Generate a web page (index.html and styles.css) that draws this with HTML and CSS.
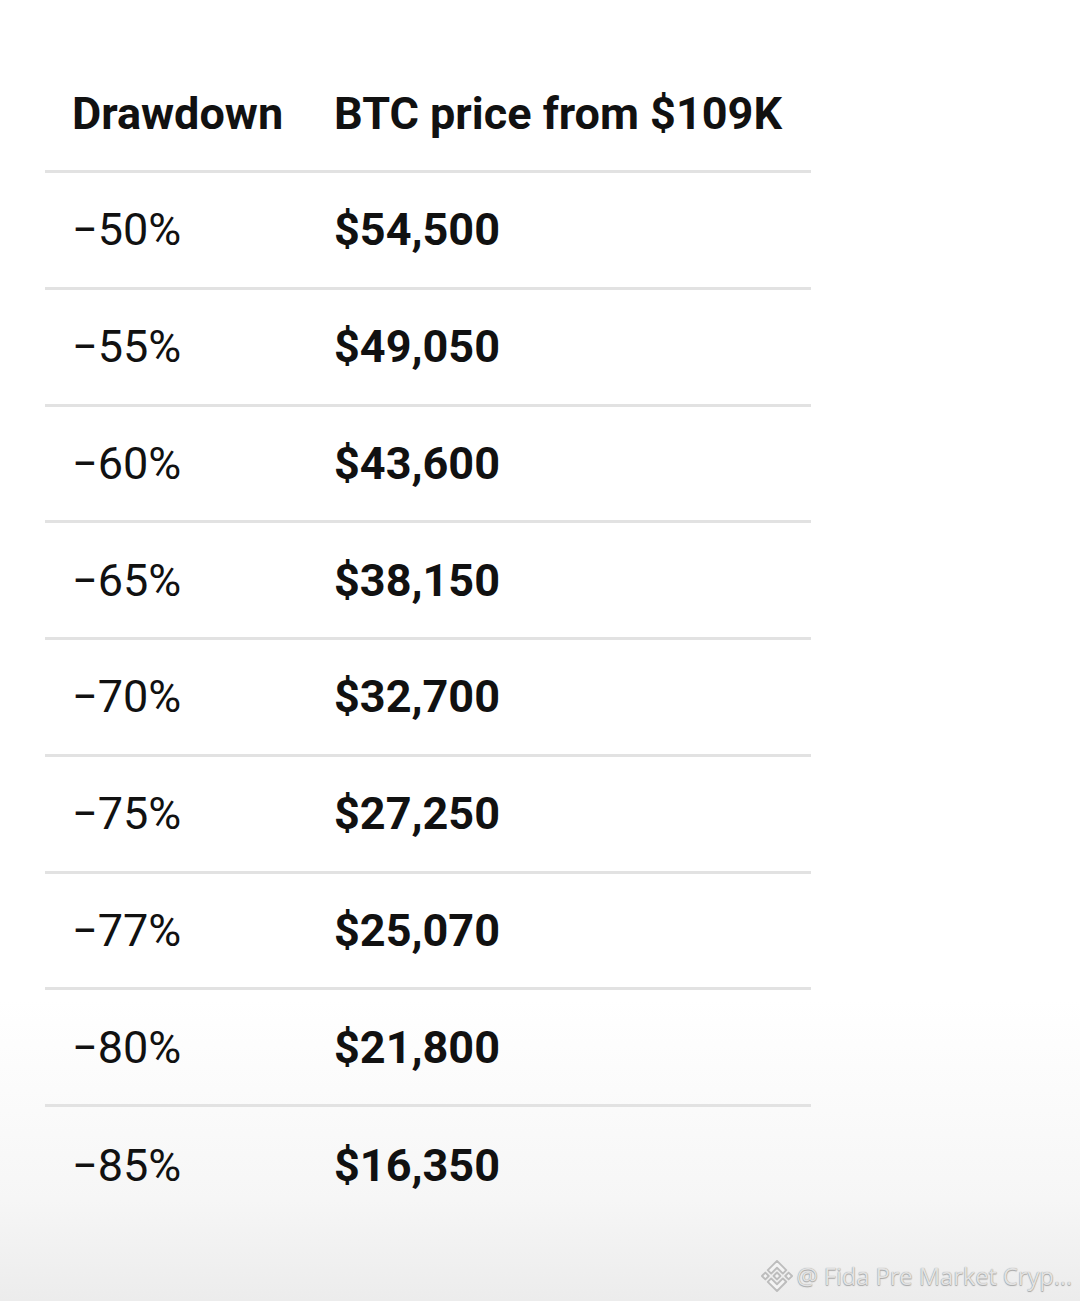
FILE: index.html
```html
<!DOCTYPE html>
<html lang="en">
<head>
<meta charset="utf-8">
<title>BTC Drawdown Table</title>
<link rel="stylesheet" href="styles.css">
</head>
<body>
<main class="page">
  <div class="table">
    <div class="row head">
      <div class="cell">Drawdown</div>
      <div class="cell">BTC price from $109K</div>
    </div>
    <div class="row"><div class="cell pct">−50%</div><div class="cell price">$54,500</div></div>
    <div class="row"><div class="cell pct">−55%</div><div class="cell price">$49,050</div></div>
    <div class="row"><div class="cell pct">−60%</div><div class="cell price">$43,600</div></div>
    <div class="row"><div class="cell pct">−65%</div><div class="cell price">$38,150</div></div>
    <div class="row"><div class="cell pct">−70%</div><div class="cell price">$32,700</div></div>
    <div class="row"><div class="cell pct">−75%</div><div class="cell price">$27,250</div></div>
    <div class="row"><div class="cell pct">−77%</div><div class="cell price">$25,070</div></div>
    <div class="row"><div class="cell pct">−80%</div><div class="cell price">$21,800</div></div>
    <div class="row last"><div class="cell pct">−85%</div><div class="cell price">$16,350</div></div>
  </div>
  <div class="watermark">
    <svg class="wm-logo" viewBox="-4 -4 134.61 134.61" width="32" height="32" aria-hidden="true">
      <g fill="#f4f4f4" stroke="#bdbdbd" stroke-width="8" stroke-linejoin="round">
        <path d="M38.73 53.2l24.59-24.58 24.6 24.6 14.3-14.31L63.32 0 24.42 38.9z"/>
        <path d="M0 63.31l14.3-14.31 14.31 14.31-14.31 14.3z"/>
        <path d="M38.73 73.41l24.59 24.59 24.6-24.6 14.31 14.29-38.9 38.91-38.91-38.88z"/>
        <path d="M98 63.31l14.3-14.31 14.31 14.3-14.31 14.32z"/>
        <path d="M77.83 63.3L63.32 48.78 48.81 63.28l14.51 14.5z"/>
      </g>
    </svg>
    <span class="wm-text">@ Fida Pre Market Cryp...</span>
  </div>
</main>
</body>
</html>
```

FILE: styles.css
```css
html, body {
  margin: 0;
  padding: 0;
}
body {
  width: 1080px;
  height: 1301px;
  background: linear-gradient(to bottom, #ffffff 0px, #ffffff 1000px, #f6f6f6 1200px, #ececec 1301px);
  font-family: Roboto, "Liberation Sans", sans-serif;
  color: #111111;
  overflow: hidden;
}
.page {
  position: relative;
  height: 1301px;
  padding: 55px 0 0 45px;
  box-sizing: border-box;
}
.table {
  width: 766px;
  display: flex;
  flex-direction: column;
}
.row {
  display: grid;
  grid-template-columns: 262px 1fr;
  align-items: center;
  height: 116.75px;
  padding-left: 27px;
  box-sizing: border-box;
  border-bottom: 3px solid #e2e2e2;
}
.row.head {
  height: 118px;
  font-weight: 700;
  font-size: 45px;
  padding-top: 2px;
}
.row.last {
  border-bottom: none;
}
.cell {
  white-space: nowrap;
}
.pct {
  font-size: 45px;
  font-weight: 400;
}
.price {
  font-size: 45px;
  font-weight: 700;
}
.watermark {
  position: absolute;
  right: 8px;
  bottom: 9px;
  display: flex;
  align-items: center;
  gap: 3px;
}
.wm-logo {
  display: block;
}
.wm-text {
  font-family: "Open Sans", "Noto Sans", sans-serif;
  font-size: 24px;
  color: #e2e2e2;
  text-shadow: 0 0 1px #8f8f8f, 0 1px 1px #aaaaaa;
  letter-spacing: -0.2px;
}
```
